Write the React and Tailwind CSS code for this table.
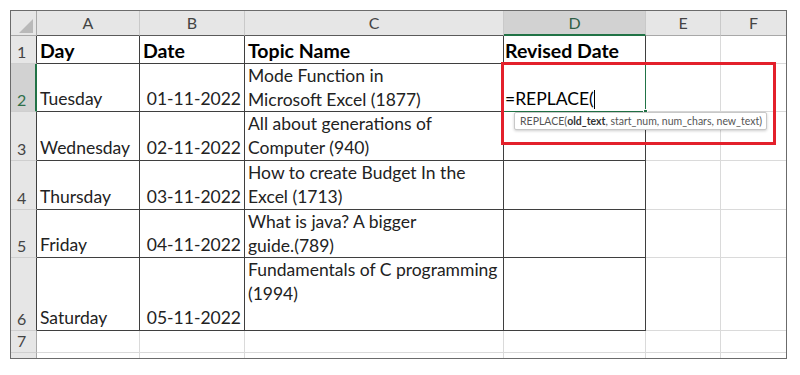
const COLS = ["w-[26px]", "w-[103px]", "w-[105px]", "w-[259px]", "w-[142px]", "w-[75px]", "w-[65px]"];
const ROWS = ["h-[25px]", "h-[28px]", "h-[48px]", "h-[49px]", "h-[49px]", "h-[48px]", "h-[73px]", "h-[22px]", "h-[5px]"];
const LETTERS = ["A", "B", "C", "D", "E", "F"];

const data = [
  { day: "Day", date: "Date", topic: ["Topic Name"], rev: "Revised Date", bold: true },
  { day: "Tuesday", date: "01-11-2022", topic: ["Mode Function in", "Microsoft Excel (1877)"] },
  { day: "Wednesday", date: "02-11-2022", topic: ["All about generations of", "Computer (940)"] },
  { day: "Thursday", date: "03-11-2022", topic: ["How to create Budget In the", "Excel (1713)"] },
  { day: "Friday", date: "04-11-2022", topic: ["What is java? A bigger", "guide.(789)"] },
  { day: "Saturday", date: "05-11-2022", topic: ["Fundamentals of C programming", "(1994)"] },
  {},
  {},
];

const HeaderRow = () => (
  <div className={`flex ${ROWS[0]}`}>
    <div className={`${COLS[0]} h-full bg-[#e6e6e6] border-r border-b border-[#a8a8a8]`}>
      <svg width="25" height="24" viewBox="0 0 25 24">
        <polygon points="22,8 22,22 8,22" fill="#b9b9b9" />
      </svg>
    </div>
    {LETTERS.map((l, i) => {
      const sel = l === "D";
      const last = i === LETTERS.length - 1;
      return (
        <div
          key={l}
          className={`${COLS[i + 1]} h-full flex items-center justify-center text-[16px] border-b ${
            last ? "" : "border-r border-r-[#c9c9c9]"
          } ${
            sel
              ? "bg-[#d2d2d2] border-b-2 border-b-[#217346] text-[#2f5f45]"
              : i < 4
              ? "bg-[#e6e6e6] border-b-[#5a5a5a] text-[#444]"
              : "bg-[#e6e6e6] border-b-[#a8a8a8] text-[#444]"
          }`}
        >
          {l}
        </div>
      );
    })}
  </div>
);

const BodyRow = ({ n, row }) => {
  const inTable = n <= 6;
  const isLast = n === 8;
  const sel = n === 2;
  const cellB = inTable ? "border-r border-b border-[#3f3f3f]" : "border-r border-b border-[#dadada]";
  const weight = row.bold ? "font-bold text-black text-[19.5px]" : "text-[#222]";
  return (
    <div className={`flex ${ROWS[n]} text-[17.5px] leading-[24px]`}>
      <div
        className={`${COLS[0]} h-full flex pl-[6px] overflow-hidden ${isLast ? "items-start" : "items-end"} ${
          isLast ? "" : "border-b border-b-[#cfcfcf]"
        } ${
          sel
            ? "bg-[#d2d2d2] border-r-2 border-r-[#217346] text-[#2f6f4a]"
            : inTable
            ? "bg-[#e6e6e6] border-r border-r-[#3f3f3f] text-[#444]"
            : "bg-[#e6e6e6] border-r border-r-[#a8a8a8] text-[#444]"
        } text-[16px]`}
      >
        <span className={isLast ? "leading-[16px] pt-[2px]" : "leading-[22px]"}>{n}</span>
      </div>
      <div className={`${COLS[1]} h-full flex items-end pl-[3px] ${cellB} ${weight} ${isLast ? "border-b-0" : ""}`}>
        {row.day}
      </div>
      <div
        className={`${COLS[2]} h-full flex items-end ${row.bold ? "pl-[3px]" : "justify-end pr-[3px]"} ${cellB} ${weight} ${
          isLast ? "border-b-0" : ""
        }`}
      >
        {row.date}
      </div>
      <div
        className={`${COLS[3]} h-full flex flex-col ${row.bold ? "justify-end" : "justify-start"} pl-[3px] ${cellB} ${weight} ${
          isLast ? "border-b-0" : ""
        }`}
      >
        {(row.topic || []).map((t) => (
          <div key={t} className="whitespace-nowrap">
            {t}
          </div>
        ))}
      </div>
      <div className={`${COLS[4]} h-full relative flex items-end pl-[1px] ${cellB} ${weight} ${isLast ? "border-b-0" : ""}`}>
        {row.rev}
        {sel && (
          <>
            <span className="text-black">=REPLACE(</span>
            <span className="w-px h-[19px] bg-black mb-[2px]" />
            <div className="absolute -left-px -top-px w-[143px] h-[49px] border border-[#217346]" />
            <div className="absolute -right-[3px] -bottom-[3px] w-[5px] h-[5px] bg-[#217346] border border-white" />
          </>
        )}
      </div>
      <div className={`${COLS[5]} h-full border-r ${isLast ? "" : "border-b"} border-[#dadada]`} />
      <div className={`${COLS[6]} h-full ${isLast ? "" : "border-b"} border-[#dadada]`} />
    </div>
  );
};

export default function App() {
  return (
    <div className="w-[800px] h-[375px] bg-white pt-[10px] pl-[10px] [font-family:Lato,sans-serif]">
      <div className="relative w-[777px] h-[349px] border border-[#6b6b6b] overflow-hidden">
        <HeaderRow />
        {data.map((row, i) => (
          <BodyRow key={i} n={i + 1} row={row} />
        ))}

        <div className="absolute left-[503px] top-[101px] w-[253px] h-[18px] bg-white border border-[#c8c8c8] rounded-[2px] shadow-[0_1px_3px_rgba(0,0,0,0.2)] flex items-center pl-[5px] text-[10.5px] leading-[14px] text-[#555] whitespace-nowrap">
          REPLACE(<span className="font-bold text-[#333]">old_text</span>, start_num, num_chars, new_text)
        </div>

        <div className="absolute left-[490px] top-[51px] w-[275px] h-[83px] border-[3px] border-[#e3202b]" />
      </div>
    </div>
  );
}
